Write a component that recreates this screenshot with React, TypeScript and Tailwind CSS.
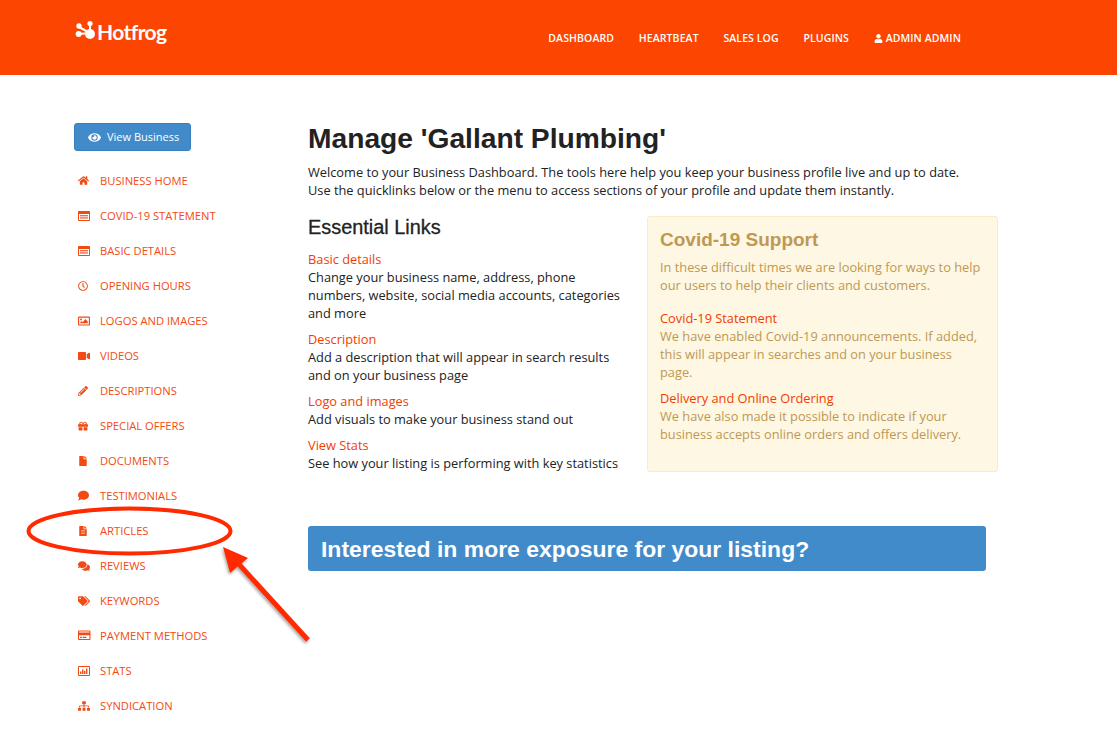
import React from "react";
import {
  FaHome, FaRegClock, FaRegImage, FaVideo, FaPencilAlt, FaGift, FaFile, FaComment,
  FaFileAlt, FaComments, FaTags, FaRegCreditCard, FaSitemap, FaEye, FaUser,
} from "react-icons/fa";

function ListAlt({ className }: { className?: string }) {
  return (
    <svg viewBox="0 0 12 10" width="12" height="10" className={className} fill="currentColor">
      <path d="M1 0h10a1 1 0 0 1 1 1v8a1 1 0 0 1-1 1H1a1 1 0 0 1-1-1V1a1 1 0 0 1 1-1zm0 3v6h10V3H1z" fillRule="evenodd" />
      <rect x="2" y="4.2" width="8" height="1.1" />
      <rect x="2" y="6.4" width="8" height="1.1" />
    </svg>
  );
}

function Stats({ className }: { className?: string }) {
  return (
    <svg viewBox="0 0 12 10" width="12" height="10" className={className} fill="currentColor">
      <path d="M1 0h10a1 1 0 0 1 1 1v8a1 1 0 0 1-1 1H1a1 1 0 0 1-1-1V1a1 1 0 0 1 1-1zm0 1v8h10V1H1z" fillRule="evenodd" />
      <rect x="2" y="5.5" width="1.4" height="2.5" />
      <rect x="4" y="3.5" width="1.4" height="4.5" />
      <rect x="6" y="4.8" width="1.4" height="3.2" />
      <rect x="8" y="2.5" width="1.4" height="5.5" />
    </svg>
  );
}

const items: [React.ComponentType<{ className?: string }>, string, string][] = [
  [FaHome, "BUSINESS HOME", "text-[11px]"],
  [ListAlt, "COVID-19 STATEMENT", ""],
  [ListAlt, "BASIC DETAILS", ""],
  [FaRegClock, "OPENING HOURS", "text-[10px]"],
  [FaRegImage, "LOGOS AND IMAGES", "text-[12px]"],
  [FaVideo, "VIDEOS", "text-[12px]"],
  [FaPencilAlt, "DESCRIPTIONS", "text-[10px]"],
  [FaGift, "SPECIAL OFFERS", "text-[10px]"],
  [FaFile, "DOCUMENTS", "text-[10px]"],
  [FaComment, "TESTIMONIALS", "text-[11px]"],
  [FaFileAlt, "ARTICLES", "text-[10px]"],
  [FaComments, "REVIEWS", "text-[12px]"],
  [FaTags, "KEYWORDS", "text-[12px]"],
  [FaRegCreditCard, "PAYMENT METHODS", "text-[12.5px]"],
  [Stats, "STATS", ""],
  [FaSitemap, "SYNDICATION", "text-[12px]"],
];

const links: [string, string[]][] = [
  ["Basic details", ["Change your business name, address, phone", "numbers, website, social media accounts, categories", "and more"]],
  ["Description", ["Add a description that will appear in search results", "and on your business page"]],
  ["Logo and images", ["Add visuals to make your business stand out"]],
  ["View Stats", ["See how your listing is performing with key statistics"]],
];

function Logo() {
  return (
    <div className="flex items-center h-[24px]">
      <svg width="24" height="24" viewBox="0 0 24 24" className="shrink-0 ml-[1px]">
        <g stroke="#fff" strokeWidth="2" fill="#fff">
          <line x1="4" y1="7" x2="15" y2="13" />
          <line x1="4" y1="14" x2="15" y2="13" />
          <line x1="15" y1="4" x2="15" y2="13" />
          <circle cx="15" cy="14" r="5" strokeWidth="0" />
          <circle cx="4" cy="6" r="2.7" strokeWidth="0" />
          <circle cx="3.6" cy="14" r="3" strokeWidth="0" />
          <circle cx="15" cy="3.5" r="2.6" strokeWidth="0" />
        </g>
      </svg>
      <span className="text-white font-bold text-[21px] tracking-[-0.6px] leading-none ml-[-2px] mb-[2px] font-['Lato',sans-serif]">Hotfrog</span>
    </div>
  );
}

export default function App() {
  return (
    <div className="relative w-[1117px] h-[731px] overflow-hidden bg-white font-['Open_Sans',sans-serif]">
      <header className="h-[75px] bg-[#fb4500] flex items-start justify-between pl-[74px] pr-[156px]">
        <div className="pt-[20px]"><Logo /></div>
        <nav className="flex items-center gap-[24.75px] pt-[30px] text-white text-[10.5px] font-semibold leading-[16px] tracking-[0.1px]">
          <span>DASHBOARD</span>
          <span>HEARTBEAT</span>
          <span>SALES LOG</span>
          <span>PLUGINS</span>
          <span className="flex items-center gap-[3px]"><FaUser className="text-[9px]" />ADMIN ADMIN</span>
        </nav>
      </header>

      <div className="flex pl-[74px]">
        <aside className="w-[234px] shrink-0 pt-[48px]">
          <button className="w-[117px] h-[28px] bg-[#428bca] border border-[#3a7fbb] rounded-[3px] text-white text-[11px] font-medium flex items-center pl-[13px] gap-[6px]">
            <FaEye className="text-[13px]" />View Business
          </button>
          <ul className="mt-[12px]">
            {items.map(([Icon, label, size]) => (
              <li key={label} className="h-[35px] flex items-center text-[#f24a12] text-[11.2px] leading-none">
                <span className="w-[26px] pl-[4px] flex items-center"><Icon className={size} /></span>
                {label}
              </li>
            ))}
          </ul>
        </aside>

        <main className="w-[690px] pt-[47px]">
          <h1 className="font-['Liberation_Sans',sans-serif] font-bold text-[28.2px] leading-[32px] text-[#222]">Manage 'Gallant Plumbing'</h1>
          <p className="mt-[9px] text-[12.8px] leading-[18px] text-[#222]">
            Welcome to your Business Dashboard. The tools here help you keep your business profile live and up to date.<br />
            Use the quicklinks below or the menu to access sections of your profile and update them instantly.
          </p>

          <div className="flex mt-[17px]">
            <section className="w-[339px] h-[256px] shrink-0">
              <h2 className="-mt-[1px] font-['Liberation_Sans',sans-serif] font-normal [-webkit-text-stroke:0.3px_#222] text-[19.9px] leading-[24px] text-[#222] mb-[11px]">Essential Links</h2>
              <div className="flex flex-col gap-[8px] text-[12.8px] leading-[18px] text-[#222]">
                {links.map(([title, lines]) => (
                  <div key={title}>
                    <div className="text-[#f23d00]">{title}</div>
                    {lines.map((l) => <div key={l} className="whitespace-nowrap">{l}</div>)}
                  </div>
                ))}
              </div>
            </section>

            <section className="w-[351px] h-[256px] bg-[#fdf7e3] border border-[#faebcc] rounded-[3px] px-[12px] pt-[12px] text-[#c09853] text-[12.8px] leading-[18px]">
              <h2 className="font-['Liberation_Sans',sans-serif] font-bold text-[19px] leading-[22px]">Covid-19 Support</h2>
              <p className="mt-[7px]">In these difficult times we are looking for ways to help<br />our users to help their clients and customers.</p>
              <div className="mt-[15px] text-[#f23d00]">Covid-19 Statement</div>
              <p>We have enabled Covid-19 announcements. If added,<br />this will appear in searches and on your business<br />page.</p>
              <div className="mt-[8px] text-[#f23d00]">Delivery and Online Ordering</div>
              <p>We have also made it possible to indicate if your<br />business accepts online orders and offers delivery.</p>
            </section>
          </div>

          <div className="mt-[54px] w-[678px] h-[45px] bg-[#428bca] rounded-[3px] pl-[13px] pt-[2px] flex items-center font-['Liberation_Sans',sans-serif] font-bold text-[22.95px] text-white">
            Interested in more exposure for your listing?
          </div>
        </main>
      </div>

      <svg className="absolute inset-0 pointer-events-none" width="1117" height="731" viewBox="0 0 1117 731">
        <defs>
          <filter id="sh" x="-20%" y="-20%" width="150%" height="150%">
            <feDropShadow dx="-1" dy="2" stdDeviation="1.5" floodColor="#000" floodOpacity="0.35" />
          </filter>
        </defs>
        <ellipse cx="129.5" cy="531" rx="101" ry="22.5" fill="none" stroke="#ff2a00" strokeWidth="4" />
        <g filter="url(#sh)">
          <line x1="308" y1="640" x2="236" y2="561" stroke="#ff2a00" strokeWidth="5" />
          <polygon points="223,547 248,558 230,573" fill="#ff2a00" />
        </g>
      </svg>
    </div>
  );
}
